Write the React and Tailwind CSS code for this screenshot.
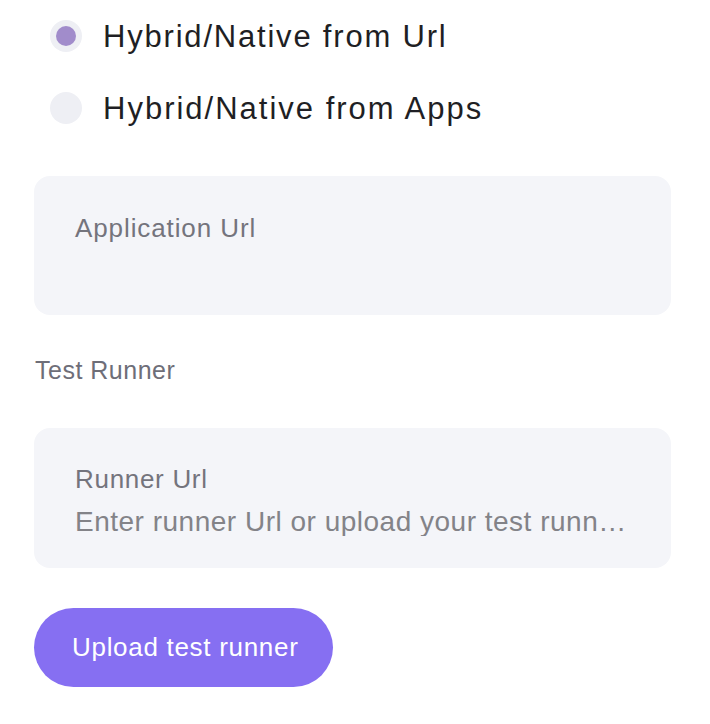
export default function App() {
  const font = { fontFamily: '"Liberation Sans", Arial, sans-serif' }

  return (
    <div className="w-[710px] h-[724px] bg-white pl-[34px] pr-[39px] pt-[20px]" style={font}>
      {/* App type radios */}
      <div className="flex flex-col gap-[40px] pl-[16px]">
        <label className="flex items-center gap-[21px] h-[32px]">
          <span className="w-[32px] h-[32px] rounded-full bg-[#eeeff4] flex items-center justify-center shrink-0">
            <span className="w-[20px] h-[20px] rounded-full bg-[#a18ccb]" />
          </span>
          <span className="text-[31px] tracking-[1.8px] text-[#1f1f24] leading-none">Hybrid/Native from Url</span>
        </label>
        <label className="flex items-center gap-[21px] h-[32px]">
          <span className="w-[32px] h-[32px] rounded-full bg-[#eeeff4] shrink-0" />
          <span className="text-[31px] tracking-[2px] text-[#1f1f24] leading-none">Hybrid/Native from Apps</span>
        </label>
      </div>

      {/* Application Url */}
      <div className="mt-[52px] h-[139px] rounded-[16px] bg-[#f4f5f9] px-[41px] pt-[39px]">
        <div className="text-[26px] tracking-[0.9px] text-[#74747d] leading-none">Application Url</div>
      </div>

      <div className="mt-[43px] text-[25px] tracking-[0.5px] text-[#6e6e78] leading-none pl-[1px]">Test Runner</div>

      {/* Runner Url */}
      <div className="mt-[45px] h-[140px] rounded-[16px] bg-[#f4f5f9] pl-[41px] pr-[44px] pt-[38px]">
        <div className="text-[26px] tracking-[0.7px] text-[#74747d] leading-none">Runner Url</div>
        <div className="mt-[16px] text-[28px] tracking-[0.5px] text-[#838388] leading-none truncate">Enter runner Url or upload your test runner file</div>
      </div>

      <button className="mt-[40px] w-[299px] h-[79px] rounded-full bg-[#866ff2] text-white text-[26px] tracking-[0.7px] flex items-center pl-[38px]">
        Upload test runner
      </button>
    </div>
  )
}
